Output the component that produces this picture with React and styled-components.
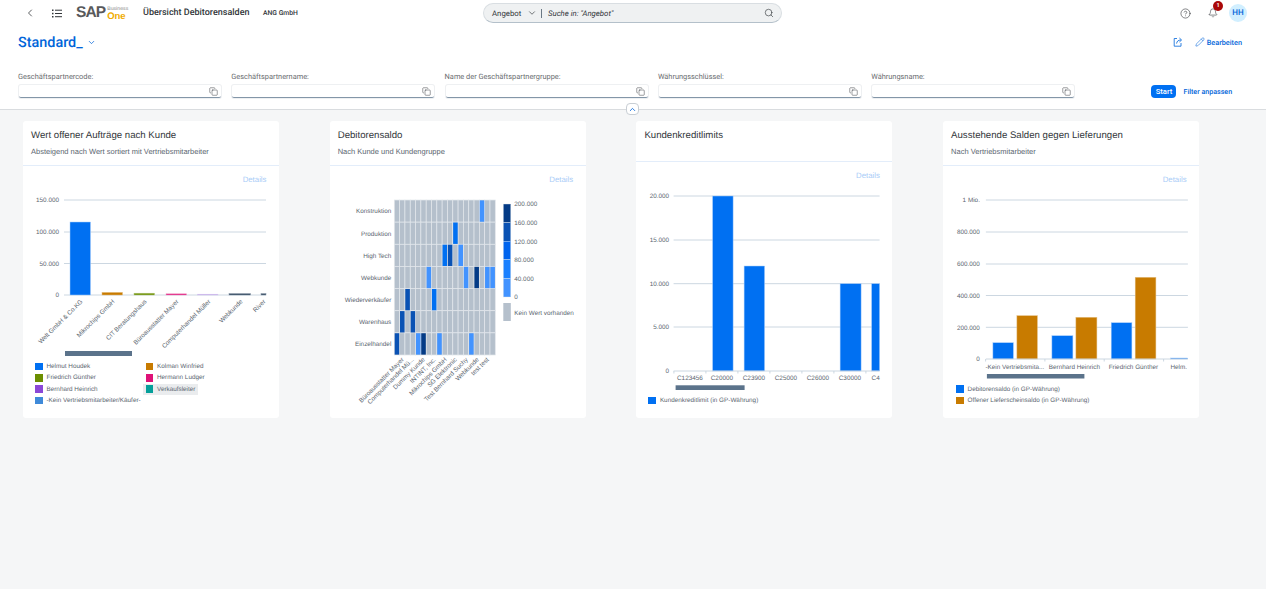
import React from "react";
import styled, { createGlobalStyle } from "styled-components";
import { ChevronLeft, ChevronDown, ChevronUp, Search, CircleHelp, Bell, Pencil, Copy } from "lucide-react";

const GlobalStyle = createGlobalStyle`
  html, body {
    margin: 0;
    padding: 0;
    background: #f5f6f7;
    font-family: Roboto, "Liberation Sans", sans-serif;
    text-rendering: geometricPrecision;
  }
  * { box-sizing: border-box; }
`;

const Page = styled.div`
  height: 589px;
  overflow: hidden;
  display: flex;
  flex-direction: column;
`;

const Top = styled.header`
  position: relative;
  height: 110px;
  flex: none;
  background: #fff;
  border-bottom: 1px solid #d9dcdf;
`;

const ShellBar = styled.div`
  height: 27px;
  display: flex;
  align-items: center;
  padding: 0 19px 1px 24px;
`;

const ShellLeft = styled.div`
  flex: 0 0 459px;
  display: flex;
  align-items: center;
`;

const ShellIcon = styled.span`
  display: flex;
  width: ${(p) => p.$w}px;
  color: #32363a;
`;

const ListGlyph = styled.svg`
  width: 10px;
  height: 9px;
`;

const Logo = styled.div`
  width: 67px;
  display: flex;
  align-items: center;
  font-family: "Liberation Sans", sans-serif;
`;

const LogoSap = styled.span`
  font-size: 15.5px;
  font-weight: 700;
  letter-spacing: -0.9px;
  color: #58595b;
  line-height: 14px;
`;

const LogoStack = styled.span`
  display: flex;
  flex-direction: column;
  margin-left: 2px;
  line-height: 7px;
`;

const LogoBusiness = styled.span`
  font-size: 5.2px;
  color: #8a8a8a;
`;

const LogoOne = styled.span`
  font-size: 9.5px;
  font-weight: 700;
  color: #f0ab00;
`;

const AppTitle = styled.div`
  font-size: 9px;
  font-weight: 500;
  color: #32363a;
  width: 120px;
`;

const Company = styled.div`
  font-size: 6.8px;
  font-weight: 500;
  color: #32363a;
`;

const SearchBar = styled.div`
  width: 299px;
  height: 20px;
  display: flex;
  align-items: center;
  padding: 0 7px 0 8px;
  background: #eff1f2;
  border: 1px solid #d9dee2;
  border-bottom-color: #b4c0ca;
  border-radius: 10px;
  font-size: 7.8px;
  color: #32363a;
`;

const SearchScope = styled.span`
  width: 35px;
`;

const SearchDivider = styled.span`
  width: 1px;
  height: 9px;
  margin: 0 6px 0 4px;
  background: #6a7884;
`;

const SearchHint = styled.span`
  flex: 1;
  font-style: italic;
`;

const ShellRight = styled.div`
  margin-left: auto;
  display: flex;
  align-items: center;
  gap: 11px;
`;

const BellWrap = styled.span`
  position: relative;
  display: flex;
  margin-left: 6px;
`;

const Badge = styled.span`
  position: absolute;
  top: -7px;
  left: 5px;
  width: 10px;
  height: 10px;
  border-radius: 50%;
  background: #aa0808;
  color: #fff;
  font-size: 5.5px;
  font-weight: 700;
  line-height: 10px;
  text-align: center;
`;

const Avatar = styled.span`
  width: 18px;
  height: 18px;
  border-radius: 50%;
  background: #d1efff;
  color: #0064d9;
  font-size: 8px;
  font-weight: 500;
  line-height: 18px;
  text-align: center;
`;

const TitleRow = styled.div`
  height: 30px;
  display: flex;
  align-items: center;
  padding: 0 24px 0 18px;
`;

const VariantName = styled.span`
  font-size: 14.4px;
  font-weight: 500;
  color: #0064d9;
`;

const VariantChevron = styled.span`
  display: flex;
  margin-left: 4px;
  color: #0064d9;
`;

const TitleActions = styled.div`
  margin-left: auto;
  display: flex;
  align-items: center;
  gap: 12px;
  color: #0064d9;
  font-size: 7.3px;
  font-weight: 500;
`;

const EditAction = styled.span`
  display: flex;
  align-items: center;
  gap: 2px;
`;

const FilterRow = styled.div`
  margin-top: 14.5px;
  display: flex;
  align-items: flex-end;
  padding-left: 18px;
`;

const Filter = styled.div`
  width: 213.3px;
  flex: none;
`;

const FilterLabel = styled.div`
  font-size: 7.4px;
  line-height: 10px;
  color: #6a6d70;
  margin-bottom: 3.5px;
`;

const FilterInput = styled.div`
  width: 202px;
  height: 13px;
  margin-left: 1px;
  padding-right: 3px;
  display: flex;
  align-items: center;
  justify-content: flex-end;
  background: #fff;
  border-radius: 2px;
  box-shadow: 0 0 0 1px #eef0f2;
  border-bottom: 1px solid #8396a8;
  color: #32363a;
`;

const FilterActions = styled.div`
  margin-left: 67px;
  display: flex;
  align-items: center;
  gap: 7px;
`;

const StartButton = styled.button`
  width: 25px;
  height: 13px;
  padding: 0;
  border: none;
  border-radius: 4px;
  background: #0070f2;
  color: #fff;
  font: 500 7.6px Roboto, sans-serif;
`;

const FilterLink = styled.span`
  font-size: 7.1px;
  font-weight: 500;
  color: #0064d9;
`;

const Collapse = styled.span`
  position: absolute;
  left: 626px;
  top: 103px;
  width: 13px;
  height: 12px;
  display: flex;
  align-items: center;
  justify-content: center;
  background: #fff;
  border: 1px solid #c8ced4;
  border-radius: 4px;
  color: #0064d9;
`;

const Cards = styled.main`
  display: flex;
  gap: 50.7px;
  padding: 11px 0 0 23px;
`;

const Card = styled.section`
  width: 256px;
  height: 297px;
  flex: none;
  background: #fff;
  border-radius: 3px;
  display: flex;
  flex-direction: column;
  font-family: "Liberation Sans", sans-serif;
`;

const CardHead = styled.div`
  height: ${(p) => p.$h}px;
  flex: none;
  padding: 9px 8px 0;
  border-bottom: 1px solid #e3edfa;
`;

const CardTitle = styled.div`
  font-size: 9.65px;
  line-height: 12px;
  color: #32363a;
`;

const CardSub = styled.div`
  margin-top: 4px;
  font-size: 7.5px;
  line-height: 12px;
  color: #5b6670;
`;

const DetailsLink = styled.div`
  height: ${(p) => p.$h}px;
  flex: none;
  padding: 9px 12.5px 0 0;
  text-align: right;
  font-size: 7.8px;
  line-height: 10px;
  color: #a9ccf7;
`;

const Chart = styled.svg`
  display: block;
  flex: none;
  width: 256px;
`;

const GridLine = styled.line`
  stroke: #c6d2de;
  stroke-width: 0.9;
`;

const AxisText = styled.text`
  font-size: 6.35px;
  fill: #5b6670;
`;

const Thumb = styled.rect`
  fill: #5b738b;
`;

const Legend = styled.div`
  display: grid;
  grid-template-columns: ${(p) => (p.$cols === 2 ? "110.5px 110.5px" : "1fr")};
  grid-auto-rows: 11.3px;
  padding: ${(p) => p.$top}px 0 0 ${(p) => p.$left}px;
  font-size: 6.35px;
  color: #5b6670;
`;

const LegendItem = styled.div`
  width: fit-content;
  display: flex;
  align-items: center;
  gap: 4px;
  padding: 0 3px;
  white-space: nowrap;
  background: ${(p) => (p.$active ? "#eaecee" : "transparent")};
`;

const Swatch = styled.span`
  width: 7.5px;
  height: 7.5px;
  flex: none;
  background: ${(p) => p.$color};
`;

const BLUE = "#0070f2";
const ORANGE = "#c87b00";

function ShareGlyph() {
  return (
    <svg width="10" height="10" viewBox="0 0 10 10" fill="none" stroke="currentColor" strokeWidth="0.8">
      <path d="M4 1.5H1.2V9.2H8V6" />
      <path d="M3.6 6.6C3.8 4.2 5.4 3 7.8 3" />
      <path d="M6.4 1L8.6 3L6.4 5" />
    </svg>
  );
}

function Bars({ data }) {
  return data.map((b, i) => (
    <rect
      key={i}
      x={b[0]}
      y={b[2]}
      width={b[1] - b[0]}
      height={b[3] - b[2]}
      fill={b[4]}
      stroke={b[5] || "#a9cdfb"}
      strokeWidth="0.5"
    />
  ));
}

const orderBars = [
  [70, 90.5, 222, 295, BLUE],
  [102, 122.5, 292.4, 295, ORANGE, "#e3bd80"],
  [134, 154.5, 293.2, 295, "#6b8e00", "#b5c780"],
  [166, 186.5, 293.8, 295, "#df1278", "#f0a0c8"],
  [197.5, 218, 294.2, 295, "#b08be0", "#d8c8f0"],
  [229, 250.5, 293.6, 295, "#354a5f", "#8796a8"],
  [261, 266, 293.6, 295, "#354a5f", "#8796a8"],
];

const orderNames = [
  ["Welt GmbH & Co.KG", 83],
  ["Mikrochips GmbH", 115],
  ["CIT Beratungshaus", 147],
  ["Büroausstatter Mayer", 179],
  ["Computerhandel Müller", 211],
  ["Webkunde", 243],
  ["River", 266],
];

function OrdersChart() {
  return (
    <Chart viewBox="23 184 256 176" height="176">
      {[200, 232, 263.5, 295].map((y) => (
        <GridLine key={y} x1="64" x2="266" y1={y} y2={y} />
      ))}
      {[[200, "150.000"], [232, "100.000"], [263.5, "50.000"], [295, "0"]].map(([y, t]) => (
        <AxisText key={t} x="59" y={y + 2.3} textAnchor="end">{t}</AxisText>
      ))}
      <Bars data={orderBars} />
      {orderNames.map(([t, x]) => (
        <AxisText key={t} textAnchor="end" transform={`translate(${x} 302) rotate(-45)`}>{t}</AxisText>
      ))}
      <Thumb x="65" y="351" width="67" height="5" />
    </Chart>
  );
}

const rowNames = ["Konstruktion", "Produktion", "High Tech", "Webkunde", "Wiederverkäufer", "Warenhaus", "Einzelhandel"];
const H1 = "#4293ff";
const H2 = "#0070f2";
const H3 = "#0a52b4";
const H4 = "#043b86";
const heatCells = [
  [0, 16, H1],
  [1, 11, H2],
  [2, 9, H2], [2, 10, H3], [2, 12, H1],
  [3, 6, H1], [3, 13, H1], [3, 15, H4], [3, 17, H1], [3, 18, H1],
  [4, 2, H3], [4, 7, H2],
  [5, 1, H3], [5, 3, H3],
  [6, 0, H3], [6, 4, H1], [6, 5, H4], [6, 8, H1], [6, 14, H1],
];
const heatColumns = [
  ["Büroausstatter Mayer", 404],
  ["Computerhandel Mü...", 414],
  ["Dummy Kunde", 425],
  ["INTINT, Inc.", 436],
  ["Mikrochips GmbH", 447],
  ["SG Elektronic", 457],
  ["Test Bernhard Suchy", 468],
  ["Webkunde", 479],
  ["test test", 489],
];
const scaleColors = ["#043b86", "#0a52b4", "#0064ee", "#1a80ff", "#4293ff"];
const scaleNames = ["200.000", "160.000", "120.000", "80.000", "40.000", "0"];

function HeatmapChart() {
  const cw = 101 / 19;
  const rh = 155 / 7;
  const cols = Array.from({ length: 19 }, (_, i) => i);
  return (
    <Chart viewBox="329.7 184 256 234" height="234">
      {rowNames.map((t, r) => (
        <g key={t}>
          <AxisText x="391" y={200 + rh * r + rh / 2 + 2.3} textAnchor="end">{t}</AxisText>
          {cols.map((c) => (
            <rect key={c} x={394 + cw * c} y={200 + rh * r} width={cw} height={rh} fill="#b5c0cc" stroke="#e3e7ec" strokeWidth="0.7" />
          ))}
        </g>
      ))}
      {heatCells.map(([r, c, color]) => (
        <rect key={`${r}-${c}`} x={394 + cw * c + 0.4} y={200 + rh * r + 0.4} width={cw - 0.8} height={rh - 0.8} fill={color} />
      ))}
      {heatColumns.map(([t, x]) => (
        <AxisText key={t} textAnchor="end" transform={`translate(${x} 360) rotate(-45)`}>{t}</AxisText>
      ))}
      {scaleColors.map((color, i) => (
        <rect key={color} x="503" y={204 + i * 18.6} width="7.5" height="18.6" fill={color} stroke="#dfe5ec" strokeWidth="0.4" />
      ))}
      {scaleNames.map((t, i) => (
        <AxisText key={t} x="514" y={206.3 + i * 18.6}>{t}</AxisText>
      ))}
      <rect x="503" y="303" width="7.5" height="18" fill="#b5c0cc" />
      <AxisText x="514" y="315">Kein Wert vorhanden</AxisText>
    </Chart>
  );
}

const creditBars = [
  [713, 733.5, 196, 371, BLUE],
  [744.5, 765, 266, 371, BLUE],
  [840.5, 861.5, 283.7, 371, BLUE],
  [872, 880, 283.7, 371, BLUE],
];
const creditNames = ["C123456", "C20000", "C23900", "C25000", "C26000", "C30000"];

function CreditChart() {
  const ticks = [674.3, 706.3, 738.3, 770.3, 802.3, 834.3, 866.3];
  return (
    <Chart viewBox="636.4 180 256 214" height="214">
      {[196, 240, 283.7, 327].map((y) => (
        <GridLine key={y} x1="674" x2="880" y1={y} y2={y} />
      ))}
      {[[196, "20.000"], [240, "15.000"], [283.7, "10.000"], [327, "5.000"], [371, "0"]].map(([y, t]) => (
        <AxisText key={t} x="669.5" y={y + 2.3} textAnchor="end">{t}</AxisText>
      ))}
      <Bars data={creditBars} />
      <GridLine x1="674" x2="880" y1="371" y2="371" />
      {ticks.map((x) => (
        <GridLine key={x} x1={x} x2={x} y1="371" y2="373.5" />
      ))}
      {creditNames.map((t, i) => (
        <AxisText key={t} x={690.3 + i * 32} y="380" textAnchor="middle">{t}</AxisText>
      ))}
      <AxisText x="872" y="380">C4</AxisText>
      <Thumb x="676" y="385.3" width="69" height="4.7" />
    </Chart>
  );
}

const balanceBars = [
  [993, 1013.5, 342.7, 359, BLUE],
  [1017, 1037.5, 315.7, 359, ORANGE, "#e3bd80"],
  [1052, 1073, 335.7, 359, BLUE],
  [1076, 1097, 317.3, 359, ORANGE, "#e3bd80"],
  [1111.3, 1132, 322.7, 359, BLUE],
  [1135.3, 1156, 277.3, 359, ORANGE, "#e3bd80"],
  [1170.7, 1187.7, 358, 359, BLUE],
];
const balanceNames = [
  ["-Kein Vertriebsmita...", 1015],
  ["Bernhard Heinrich", 1074.5],
  ["Friedrich Günther", 1133.5],
];

function BalanceChart() {
  return (
    <Chart viewBox="943.1 184 256 197" height="197">
      {[200, 232, 264, 295.5, 327.3].map((y) => (
        <GridLine key={y} x1="986" x2="1188" y1={y} y2={y} />
      ))}
      {[[200, "1 Mio."], [232, "800.000"], [264, "600.000"], [295.5, "400.000"], [327.3, "200.000"], [359, "0"]].map(([y, t]) => (
        <AxisText key={t} x="980" y={y + 2.3} textAnchor="end">{t}</AxisText>
      ))}
      <Bars data={balanceBars} />
      <GridLine x1="986" x2="1188" y1="359" y2="359" />
      {[985.7, 1045, 1104.3, 1163.7].map((x) => (
        <GridLine key={x} x1={x} x2={x} y1="359" y2="361.5" />
      ))}
      {balanceNames.map(([t, x]) => (
        <AxisText key={t} x={x} y="368.5" textAnchor="middle">{t}</AxisText>
      ))}
      <AxisText x="1170.5" y="368.5">Helm.</AxisText>
      <Thumb x="987" y="374" width="97.5" height="4.5" />
    </Chart>
  );
}

const orderLegend = [
  ["Helmut Houdek", BLUE],
  ["Kolman Winfried", ORANGE],
  ["Friedrich Günther", "#6b8e00"],
  ["Hermann Ludger", "#df1278"],
  ["Bernhard Heinrich", "#8b47d7"],
  ["Verkaufsleiter", "#049f9a", true],
  ["-Kein Vertriebsmitarbeiter/Käufer-", "#3f8ad9"],
];

function LegendList({ items, cols, left, top }) {
  return (
    <Legend $cols={cols} $left={left} $top={top}>
      {items.map(([name, color, active]) => (
        <LegendItem key={name} $active={active}>
          <Swatch $color={color} />
          {name}
        </LegendItem>
      ))}
    </Legend>
  );
}

const filters = [
  "Geschäftspartnercode:",
  "Geschäftspartnername:",
  "Name der Geschäftspartnergruppe:",
  "Währungsschlüssel:",
  "Währungsname:",
];

export default function App() {
  return (
    <Page>
      <GlobalStyle />
      <Top>
        <ShellBar>
          <ShellLeft>
            <ShellIcon $w={28}><ChevronLeft size={12} strokeWidth={1.6} /></ShellIcon>
            <ShellIcon $w={24}>
              <ListGlyph viewBox="0 0 10 9" fill="currentColor">
                <rect x="0" y="0.5" width="1.5" height="1.5" />
                <rect x="3" y="0.7" width="7" height="1" />
                <rect x="0" y="3.8" width="1.5" height="1.5" />
                <rect x="3" y="4" width="7" height="1" />
                <rect x="0" y="7" width="1.5" height="1.5" />
                <rect x="3" y="7.2" width="7" height="1" />
              </ListGlyph>
            </ShellIcon>
            <Logo>
              <LogoSap>SAP</LogoSap>
              <LogoStack>
                <LogoBusiness>Business</LogoBusiness>
                <LogoOne>One</LogoOne>
              </LogoStack>
            </Logo>
            <AppTitle>Übersicht Debitorensalden</AppTitle>
            <Company>ANG GmbH</Company>
          </ShellLeft>
          <SearchBar>
            <SearchScope>Angebot</SearchScope>
            <ChevronDown size={10} strokeWidth={1.6} />
            <SearchDivider />
            <SearchHint>Suche in: "Angebot"</SearchHint>
            <Search size={10} strokeWidth={1.5} />
          </SearchBar>
          <ShellRight>
            <ShellIcon $w={11}><CircleHelp size={11} strokeWidth={1.3} /></ShellIcon>
            <BellWrap>
              <Bell size={10} strokeWidth={1.4} color="#32363a" />
              <Badge>1</Badge>
            </BellWrap>
            <Avatar>HH</Avatar>
          </ShellRight>
        </ShellBar>
        <TitleRow>
          <VariantName>Standard_</VariantName>
          <VariantChevron><ChevronDown size={9} strokeWidth={2} /></VariantChevron>
          <TitleActions>
            <ShareGlyph />
            <EditAction><Pencil size={10} strokeWidth={1.3} />Bearbeiten</EditAction>
          </TitleActions>
        </TitleRow>
        <FilterRow>
          {filters.map((name) => (
            <Filter key={name}>
              <FilterLabel>{name}</FilterLabel>
              <FilterInput><Copy size={9} strokeWidth={1.3} /></FilterInput>
            </Filter>
          ))}
          <FilterActions>
            <StartButton>Start</StartButton>
            <FilterLink>Filter anpassen</FilterLink>
          </FilterActions>
        </FilterRow>
        <Collapse><ChevronUp size={9} strokeWidth={2.2} /></Collapse>
      </Top>
      <Cards>
        <Card>
          <CardHead $h={45}>
            <CardTitle>Wert offener Aufträge nach Kunde</CardTitle>
            <CardSub>Absteigend nach Wert sortiert mit Vertriebsmitarbeiter</CardSub>
          </CardHead>
          <DetailsLink $h={18}>Details</DetailsLink>
          <OrdersChart />
          <LegendList items={orderLegend} cols={2} left={9} top={1} />
        </Card>
        <Card>
          <CardHead $h={45}>
            <CardTitle>Debitorensaldo</CardTitle>
            <CardSub>Nach Kunde und Kundengruppe</CardSub>
          </CardHead>
          <DetailsLink $h={18}>Details</DetailsLink>
          <HeatmapChart />
        </Card>
        <Card>
          <CardHead $h={41}>
            <CardTitle>Kundenkreditlimits</CardTitle>
          </CardHead>
          <DetailsLink $h={18}>Details</DetailsLink>
          <CreditChart />
          <LegendList items={[["Kundenkreditlimit (in GP-Währung)", BLUE]]} left={9} top={1} />
        </Card>
        <Card>
          <CardHead $h={45}>
            <CardTitle>Ausstehende Salden gegen Lieferungen</CardTitle>
            <CardSub>Nach Vertriebsmitarbeiter</CardSub>
          </CardHead>
          <DetailsLink $h={18}>Details</DetailsLink>
          <BalanceChart />
          <LegendList
            items={[
              ["Debitorensaldo (in GP-Währung)", BLUE],
              ["Offener Lieferscheinsaldo (in GP-Währung)", ORANGE],
            ]}
            left={10}
            top={2.5}
          />
        </Card>
      </Cards>
    </Page>
  );
}
